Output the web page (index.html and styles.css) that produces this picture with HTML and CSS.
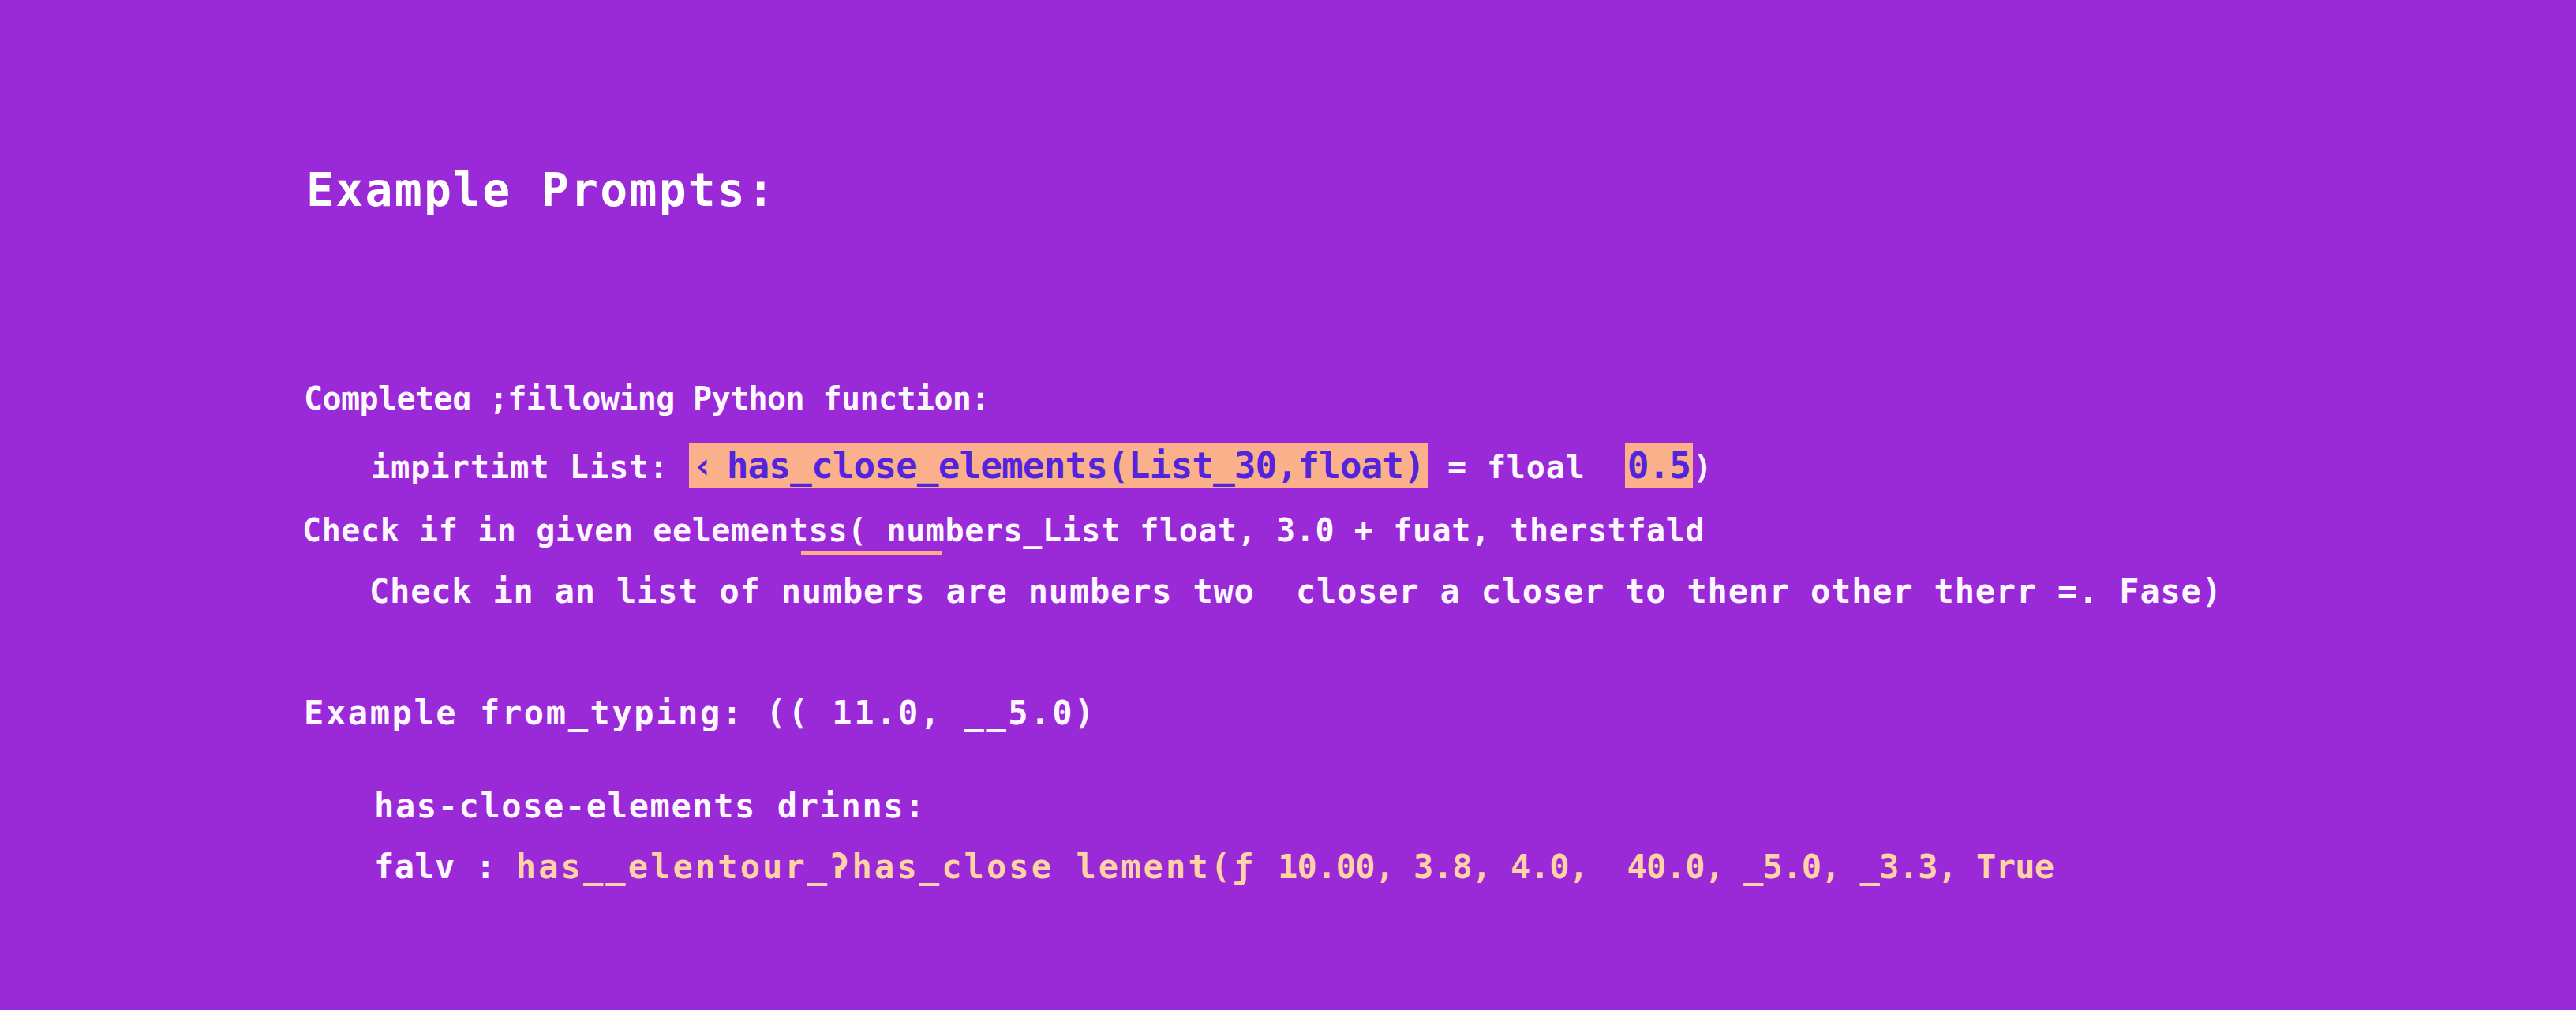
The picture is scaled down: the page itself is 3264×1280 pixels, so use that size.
FILE: index.html
```html
<!DOCTYPE html>
<html>
<head>
<meta charset="utf-8">
<link rel="stylesheet" href="styles.css">
</head>
<body>
<main class="page">
  <h1 class="heading">Example Prompts:</h1>
  <div class="line l1">Completeɑ ;fillowing Python function:</div>
  <div class="line l2">
    <span class="w2a">impirtimt List: </span><span class="hl hl-main"><span class="lq">‹</span>has_close_elements(List_30,float)</span><span class="w2b"> = floal  </span><span class="hl hl-num">0.5</span><span class="w2c">)</span>
  </div>
  <div class="line l3">Check if in given eelement<span class="ul">ss(</span> numbers_List float, 3.0 + fuat, therstfald</div>
  <div class="line l4">Check in an list of numbers are numbers two  closer a closer to thenr other therr =. Fase)</div>
  <div class="line l5">Example from_typing: (( 11.0, __5.0)</div>
  <div class="line l6">has-close-elements drinns:</div>
  <div class="line l7"><span class="w7">falv : </span><span class="pk pk-a">has__elentour_ʔhas_close lement(ƒ </span><span class="pk pk-b">10.00, 3.8, 4.0,  40.0, _5.0, _3.3, True</span></div>
</main>
</body>
</html>
```

FILE: styles.css
```css
html, body {
  margin: 0;
  padding: 0;
}
body {
  width: 3264px;
  height: 1280px;
  overflow: hidden;
  background: #9a29d7;
  color: #fdf7ff;
  font-family: "DejaVu Sans Mono", "Liberation Mono", monospace;
}
.page {
  padding: 201px 0 0 385px;
}
.heading {
  margin: 0 0 0 3px;
  font-size: 58px;
  line-height: 80px;
  height: 80px;
  font-weight: bold;
  letter-spacing: 2.3px;
  color: #ffffff;
}
.line {
  font-size: 40px;
  line-height: 60px;
  height: 60px;
  white-space: pre;
  font-weight: bold;
}
.l1 {
  margin-top: 194px;
  letter-spacing: -0.6px;
}
.l2 {
  margin-top: 27px;
  margin-left: 85px;
  display: flex;
  align-items: baseline;
}
.w2a {
  letter-spacing: 1.1px;
}
.w2b {
  letter-spacing: 0.9px;
}
.w2c {
  letter-spacing: 0;
}
.hl {
  background: #fbb08c;
  color: #5323dd;
  font-size: 46px;
  line-height: 56px;
  height: 56px;
  letter-spacing: -0.9px;
  white-space: pre;
}
.hl-main {
  padding: 0 4px;
}
.hl-num {
  padding: 0 3px;
}
.lq {
  margin-right: 17px;
}
.l3 {
  margin-top: 20px;
  margin-left: -2px;
  letter-spacing: 0.6px;
}
.ul {
  position: relative;
}
.ul::after {
  content: "";
  position: absolute;
  left: -10px;
  width: 178px;
  bottom: -9px;
  height: 6px;
  background: #fdae88;
}
.l4 {
  margin-top: 18px;
  margin-left: 83px;
  font-size: 42px;
  letter-spacing: 0.8px;
}
.l5 {
  margin-top: 94px;
  font-size: 42px;
  letter-spacing: 2.6px;
}
.l6 {
  margin-top: 58px;
  margin-left: 89px;
  font-size: 42px;
  letter-spacing: 1.6px;
}
.l7 {
  margin-top: 17px;
  margin-left: 89px;
  font-size: 42px;
}
.w7 {
  letter-spacing: 0.4px;
}
.pk {
  color: #ffd3a6;
}
.pk-a {
  letter-spacing: 3.1px;
}
.pk-b {
  letter-spacing: -0.7px;
}
```
